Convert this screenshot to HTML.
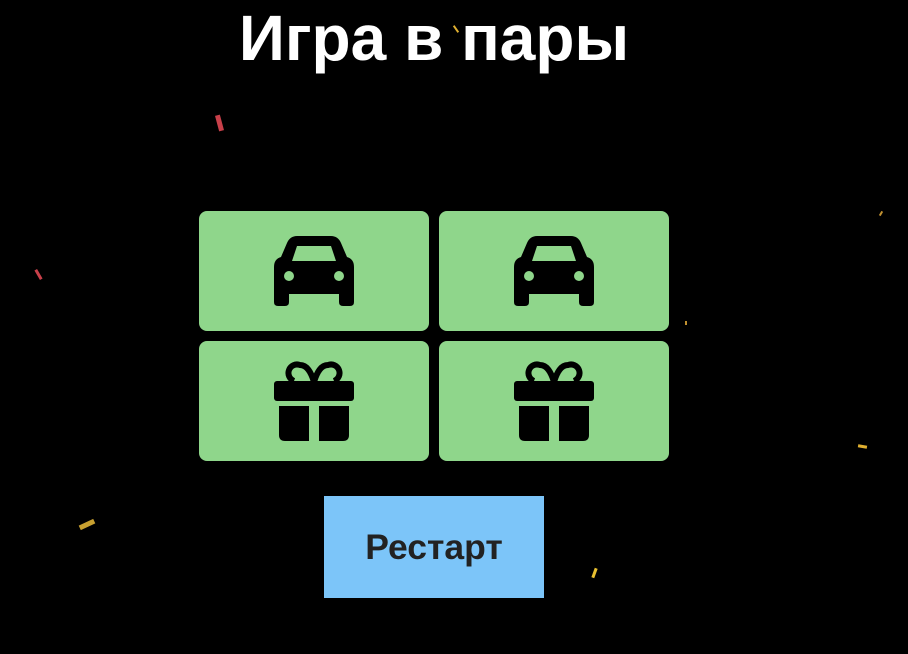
<!DOCTYPE html>
<html><head><meta charset="utf-8"><style>
html,body{margin:0;padding:0;background:#000;width:908px;height:654px;overflow:hidden;position:relative;font-family:"Liberation Sans",Arial,sans-serif}
h1{position:absolute;left:0;width:868px;text-align:center;top:0;margin:0;color:#fff;font-size:64px;font-weight:bold;line-height:76px}
.card{position:absolute;width:230px;height:120px;background:#8fd68b;border-radius:8px}
.card svg{position:absolute;left:75px;top:25px}
.btn{position:absolute;left:324px;top:496px;width:220px;height:102px;background:#7cc5f9;color:#222;font-size:35.5px;font-weight:bold;text-align:center;line-height:102px}
.c{position:absolute}
</style></head><body>
<h1>Игра в пары</h1>
<div class="card" style="left:199px;top:211px"><svg width="80" height="70" viewBox="0 0 80 70"><path d="M23 0H57Q64 0 67 7L73 21Q80 23 80 31V66Q80 70 76 70H69Q65 70 65 66V58H15V66Q15 70 11 70H4Q0 70 0 66V31Q0 23 7 21L13 7Q16 0 23 0Z" fill="#000"/><path d="M23 10H57L62 25H18Z" fill="#8fd68b"/><circle cx="15" cy="40" r="5" fill="#8fd68b"/><circle cx="65" cy="40" r="5" fill="#8fd68b"/></svg></div>
<div class="card" style="left:439px;top:211px"><svg width="80" height="70" viewBox="0 0 80 70"><path d="M23 0H57Q64 0 67 7L73 21Q80 23 80 31V66Q80 70 76 70H69Q65 70 65 66V58H15V66Q15 70 11 70H4Q0 70 0 66V31Q0 23 7 21L13 7Q16 0 23 0Z" fill="#000"/><path d="M23 10H57L62 25H18Z" fill="#8fd68b"/><circle cx="15" cy="40" r="5" fill="#8fd68b"/><circle cx="65" cy="40" r="5" fill="#8fd68b"/></svg></div>
<div class="card" style="left:199px;top:341px"><svg width="80" height="82" viewBox="0 0 80 82" style="top:19px"><path d="M40 22C37 12 33 5 26 5A8.5 8.5 0 0 0 20 21M40 22C43 12 47 5 54 5A8.5 8.5 0 0 1 60 21" fill="none" stroke="#000" stroke-width="6"/><rect x="0" y="21" width="80" height="20" rx="3"/><path d="M5 46H35V81H11Q5 81 5 75Z"/><path d="M45 46H75V75Q75 81 69 81H45Z"/></svg></div>
<div class="card" style="left:439px;top:341px"><svg width="80" height="82" viewBox="0 0 80 82" style="top:19px"><path d="M40 22C37 12 33 5 26 5A8.5 8.5 0 0 0 20 21M40 22C43 12 47 5 54 5A8.5 8.5 0 0 1 60 21" fill="none" stroke="#000" stroke-width="6"/><rect x="0" y="21" width="80" height="20" rx="3"/><path d="M5 46H35V81H11Q5 81 5 75Z"/><path d="M45 46H75V75Q75 81 69 81H45Z"/></svg></div>
<div class="btn">Рестарт</div>
<div class="c" style="left:217px;top:115px;width:5px;height:16px;background:#c8404a;transform:rotate(-15deg)"></div>
<div class="c" style="left:37px;top:269px;width:3px;height:11px;background:#c8404a;transform:rotate(-30deg)"></div>
<div class="c" style="left:79px;top:522px;width:16px;height:5px;background:#c8a030;transform:rotate(-25deg)"></div>
<div class="c" style="left:593px;top:568px;width:3px;height:10px;background:#e8c030;transform:rotate(20deg)"></div>
<div class="c" style="left:858px;top:445px;width:9px;height:3px;background:#e0b030;transform:rotate(10deg)"></div>
<div class="c" style="left:455px;top:25px;width:2px;height:8px;background:#e0b030;transform:rotate(-35deg)"></div>
<div class="c" style="left:880px;top:211px;width:2px;height:5px;background:#c09030;transform:rotate(30deg)"></div>
<div class="c" style="left:685px;top:321px;width:2px;height:4px;background:#c09030"></div>
</body></html>
